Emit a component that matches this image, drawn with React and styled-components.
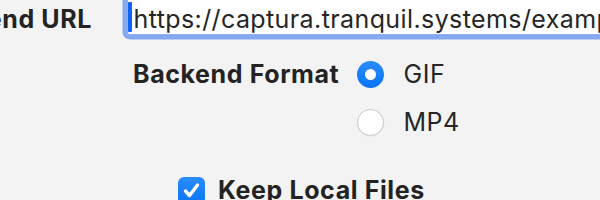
import React from "react";
import styled, { createGlobalStyle } from "styled-components";

const Global = createGlobalStyle`
  html, body { margin: 0; padding: 0; background: #f3f3f3; }
  body { font-family: Inter, "Noto Sans", sans-serif; color: #232323; overflow: hidden; }
`;

const Form = styled.div`
  display: flex;
  flex-direction: column;
  width: 600px;
  height: 200px;
  overflow: hidden;
`;

const UrlRow = styled.div`
  display: flex;
  align-items: flex-end;
  margin-top: -3px;
  height: 38px;
`;

const LabelCell = styled.div`
  width: ${(p) => p.$width}px;
  flex: none;
  display: flex;
  justify-content: flex-end;
  white-space: nowrap;
`;

const Label = styled.span`
  font-size: 25px;
  line-height: 30px;
  font-weight: 700;
  letter-spacing: 0.6px;
  white-space: nowrap;
  padding-bottom: ${(p) => p.$lift || 0}px;
`;

const Field = styled.div`
  margin-left: 35px;
  flex: none;
  width: 620px;
  height: 38px;
  box-sizing: border-box;
  background: #fff;
  border: 1px solid #8fb0ee;
  box-shadow: 0 0 0 4.5px #85a9f0;
  border-radius: 3px;
  padding: 6px 0 0 0;
  display: flex;
  align-items: flex-start;
  white-space: nowrap;
  font-size: 25px;
  line-height: 30px;
  letter-spacing: 0.4px;
  color: #262626;
`;

const Caret = styled.span`
  display: inline-block;
  width: 3.5px;
  height: 30px;
  margin-top: -2px;
  margin-right: 2px;
  background: #0f62f2;
  border-radius: 1px;
  flex: none;
`;

const FormatRow = styled.div`
  display: flex;
  align-items: flex-start;
  margin-top: 24px;
  padding-left: 133px;
  gap: 18px;
`;

const RadioList = styled.div`
  display: flex;
  flex-direction: column;
  gap: 18px;
`;

const Option = styled.div`
  display: flex;
  align-items: center;
  gap: 19px;
  height: 30px;
  font-size: 25px;
  line-height: 30px;
  letter-spacing: 0.6px;
  color: #262626;
`;

const Radio = styled.span`
  width: 27px;
  height: 27px;
  box-sizing: border-box;
  border-radius: 50%;
  flex: none;
  display: flex;
  align-items: center;
  justify-content: center;
  background: ${(p) => (p.$checked ? "linear-gradient(#2a8cff, #0a74f5)" : "#fff")};
  border: ${(p) => (p.$checked ? "none" : "1px solid #c9c9c9")};
  box-shadow: ${(p) => (p.$checked ? "none" : "0 0.5px 1px rgba(0,0,0,0.08)")};
  &::after {
    content: "";
    display: ${(p) => (p.$checked ? "block" : "none")};
    width: 11px;
    height: 11px;
    border-radius: 50%;
    background: #fff;
  }
`;

const CheckRow = styled.div`
  display: flex;
  align-items: center;
  gap: 13px;
  margin-top: 38px;
  padding-left: 178px;
  height: 30px;
`;

const CheckBox = styled.span`
  width: 27px;
  height: 27px;
  border-radius: 6px;
  flex: none;
  background: linear-gradient(#2a8cff, #0a74f5);
  display: flex;
  align-items: center;
  justify-content: center;
`;

export default function App() {
  return (
    <>
      <Global />
      <Form>
        <UrlRow>
          <LabelCell $width={92}>
            <Label $lift={1}>Backend URL</Label>
          </LabelCell>
          <Field>
            <Caret />
            https://captura.tranquil.systems/example
          </Field>
        </UrlRow>
        <FormatRow>
          <Label>Backend Format</Label>
          <RadioList>
            <Option>
              <Radio $checked />
              GIF
            </Option>
            <Option>
              <Radio />
              MP4
            </Option>
          </RadioList>
        </FormatRow>
        <CheckRow>
          <CheckBox>
            <svg width="19" height="19" viewBox="0 0 19 19">
              <path d="M3.5 10 L7.5 14.5 L15.5 4" fill="none" stroke="#fff" strokeWidth="3.4" strokeLinecap="round" strokeLinejoin="round" />
            </svg>
          </CheckBox>
          <Label>Keep Local Files</Label>
        </CheckRow>
      </Form>
    </>
  );
}
